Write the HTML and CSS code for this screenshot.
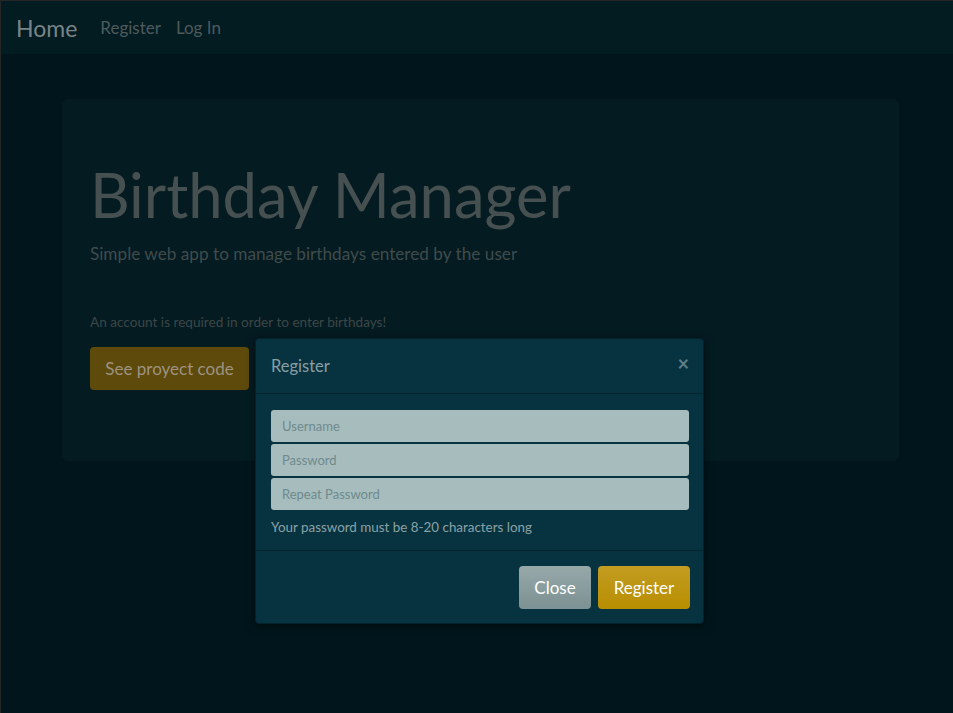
FILE: index.html
```html
<!DOCTYPE html>
<html>
<head>
<meta charset="utf-8">
<title>Birthday Manager</title>
<link rel="stylesheet" href="styles.css">
</head>
<body>
<div class="frame">
  <nav class="navbar">
    <a class="brand" href="#">Home</a>
    <a class="nav-link" href="#">Register</a>
    <a class="nav-link" href="#">Log In</a>
  </nav>
  <main class="container">
    <section class="jumbotron">
      <h1 class="title">Birthday Manager</h1>
      <p class="lead">Simple web app to manage birthdays entered by the user</p>
      <p class="note">An account is required in order to enter birthdays!</p>
      <a class="btn btn-code" href="#">See proyect code</a>
    </section>
  </main>
  <div class="modal">
    <div class="modal-header">
      <h4 class="modal-title">Register</h4>
      <span class="close">&times;</span>
    </div>
    <div class="modal-body">
      <input class="field" type="text" placeholder="Username">
      <input class="field" type="password" placeholder="Password">
      <input class="field" type="password" placeholder="Repeat Password">
      <p class="help">Your password must be 8-20 characters long</p>
    </div>
    <div class="modal-footer">
      <button class="btn btn-close">Close</button>
      <button class="btn btn-register">Register</button>
    </div>
  </div>
</div>
</body>
</html>
```

FILE: styles.css
```css
html, body {
  margin: 0;
  padding: 0;
  height: 100%;
}
body {
  font-family: Lato, "Noto Sans", sans-serif;
  background: #01161c;
}
.frame {
  position: relative;
  box-sizing: border-box;
  height: 713px;
  border: 1px solid #262626;
  border-right: none;
  border-bottom: none;
  background: #01161c;
  overflow: hidden;
}
.navbar {
  display: flex;
  align-items: center;
  height: 53px;
  padding-left: 15px;
  background: #021c22;
}
.brand {
  color: #7b8486;
  font-size: 23px;
  text-decoration: none;
  margin-right: 23px;
}
.nav-link {
  color: #4f5a5c;
  font-size: 17px;
  text-decoration: none;
  margin-right: 15px;
}
.container {
  padding: 45px 54px 0 61px;
}
.jumbotron {
  box-sizing: border-box;
  height: 362px;
  background: #041b21;
  border-radius: 6px;
  padding: 55px 29px 0 28px;
}
.title {
  margin: 0;
  font-weight: 400;
  font-size: 61.5px;
  line-height: 80px;
  color: #475050;
}
.lead {
  margin: 7px 0 0 0;
  font-size: 17.2px;
  line-height: 26px;
  color: #404b4c;
}
.note {
  margin: 46px 0 0 0;
  font-size: 13.6px;
  line-height: 18px;
  color: #3c4748;
}
.btn {
  display: inline-flex;
  align-items: center;
  justify-content: center;
  box-sizing: border-box;
  border: none;
  border-radius: 4px;
  font-family: inherit;
  text-decoration: none;
}
.btn-code {
  margin-top: 16px;
  width: 159px;
  height: 43px;
  background: #5e4a0b;
  color: #9c9280;
  font-size: 17px;
}
.modal {
  position: absolute;
  left: 254px;
  top: 337px;
  width: 449px;
  box-sizing: border-box;
  background: #073341;
  border: 1px solid #04222b;
  border-radius: 4px;
  box-shadow: 0 2px 8px rgba(0,0,0,0.5);
}
.modal-header {
  display: flex;
  justify-content: space-between;
  align-items: center;
  height: 55px;
  box-sizing: border-box;
  padding: 0 14px 0 15px;
  border-bottom: 1px solid #05242e;
}
.modal-title {
  margin: 0;
  font-weight: 400;
  font-size: 16.5px;
  color: #8a9ea3;
}
.close {
  color: #5f7e86;
  font-size: 20px;
  font-weight: 700;
  line-height: 1;
  margin-top: -6px;
}
.modal-body {
  display: flex;
  flex-direction: column;
  gap: 2px;
  padding: 16px 14px 14px 15px;
}
.field {
  box-sizing: border-box;
  width: 418px;
  height: 32px;
  border: none;
  border-radius: 3px;
  background: #a7bcbc;
  padding: 0 11px;
  font-family: inherit;
  font-size: 13px;
  color: #333;
}
.field::placeholder {
  color: #6e8a8e;
}
.help {
  margin: 6px 0 0 0;
  font-size: 13.4px;
  line-height: 18px;
  color: #8aa2a5;
}
.modal-footer {
  display: flex;
  justify-content: flex-end;
  gap: 7px;
  padding: 15px 13px 14px 15px;
  border-top: 1px solid #05242e;
}
.btn-close {
  width: 72px;
  height: 43px;
  background: linear-gradient(#97a8a9, #7c9193);
  color: #fff;
  font-size: 17px;
}
.btn-register {
  width: 92px;
  height: 43px;
  background: linear-gradient(#c39c22, #b88e00);
  color: #fff;
  font-size: 17px;
}
```
